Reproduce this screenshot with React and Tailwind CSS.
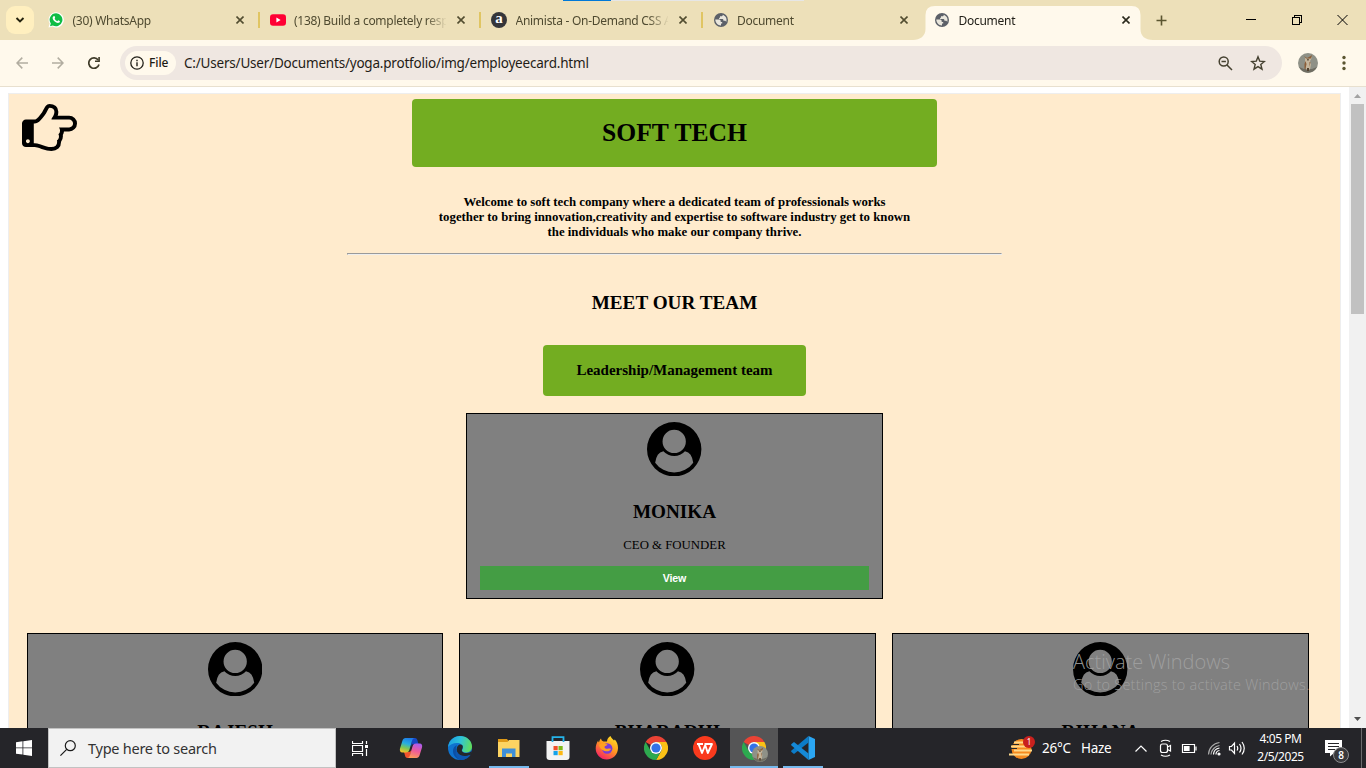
import React from "react";

const Close = ({ dark }) => (
  <svg className="h-2 w-2 shrink-0" viewBox="0 0 8 8">
    <path d="M0.5 0.5L7.5 7.5M7.5 0.5L0.5 7.5" stroke={dark ? "#2b2a1c" : "#524d30"} strokeWidth="1.6" fill="none" />
  </svg>
);

const WhatsApp = () => (
  <svg className="h-4 w-4 shrink-0" viewBox="0 0 16 16">
    <path d="M8.2.3A7.5 7.5 0 0 0 1.7 11.6L.5 15.6l4-1.1A7.6 7.6 0 1 0 8.2.3z" fill="#fff" />
    <path d="M8.2 1.3a6.5 6.5 0 0 0-5.4 10.2l-.8 2.8 2.8-.8A6.5 6.5 0 1 0 8.2 1.3z" fill="#0fbd45" />
    <path d="M5.6 4.2c.5-.3.9-.2 1.1.3l.4 1c.2.5-.4.8-.5 1.2.6 1.2 1.5 2 2.6 2.5.5-.1.8-1 1.2-.9l1.3.7c.5.3.1 1.2-.3 1.5-1.400 1-3.400.2-4.700-1C5.300 8.300 4.300 6.600 4.700 5.200c.2-.4.5-.8.9-1z" fill="#fff" />
  </svg>
);

const YouTube = () => (
  <svg className="h-4 w-4 shrink-0" viewBox="0 0 16 16">
    <rect y="2.300" width="16" height="11.400" rx="3" fill="#f03" />
    <path d="M6.400 5.600v4.800L10.600 8z" fill="#fff" />
  </svg>
);

const Animista = () => (
  <span className="flex h-4 w-4 shrink-0 items-center justify-center rounded-full bg-[#35363a] pb-[3px] font-['Liberation_Serif',serif] text-[15px] leading-[13px] font-bold text-white">
    a
  </span>
);

const Globe = () => (
  <svg className="h-4 w-4 shrink-0" viewBox="0 0 16 16">
    <circle cx="8" cy="8" r="7" fill="#5c6068" />
    <path d="M2.300 7.600h3.500c1.200 0 1.900.6 1.900 1.600v.7h1.500v1.700H8v1.900C5 13.600 2.300 11 2.300 7.600zM9.800 2.700c-.1 1-.6 1.500-1.600 1.500H7v1.500h-.9v1.200h3c.8 0 1.300.5 1.300 1.200v.700h1.300c.8 0 1.200.4 1.500 1.100.9-2.300.2-5.700-3.400-7.200z" fill="#e9e6dc" />
  </svg>
);

const tabs = [
  { icon: <WhatsApp />, title: "(30) WhatsApp" },
  { icon: <YouTube />, title: "(138) Build a completely responsive" },
  { icon: <Animista />, title: "Animista - On-Demand CSS Animations" },
  { icon: <Globe />, title: "Document" },
  { icon: <Globe />, title: "Document", active: true },
];

function TabStrip() {
  return (
    <div className="relative flex h-10 shrink-0 bg-[#ede0b9]">
      <div className="absolute top-0 left-[563px] flex h-px">
        <div className="w-12 bg-[#0078d7]" />
        <div className="w-[193px] bg-[#e6e6e6]" />
      </div>
      <div className="mt-1.5 ml-1.5 flex h-7 w-7 shrink-0 items-center justify-center rounded-[9px] bg-[#ffefbf]">
        <svg className="h-2 w-2.5" viewBox="0 0 10 8">
          <path d="M1.500 2L5 5.500 8.500 2" fill="none" stroke="#25230f" strokeWidth="1.900" />
        </svg>
      </div>
      <div className="ml-[3px] flex">
        {tabs.map((t, i) => (
          <div key={i} className="relative flex h-10 w-[221.5px] items-center pl-[11px]">
            {t.active && (
              <svg className="absolute top-1.5 -left-2.5 h-[34px] w-[240px]" viewBox="0 0 240 34">
                <path d="M0 34C7 34 12.500 30 12.500 23V9Q12.500 0 22 0H218.500Q227.500 0 227.500 9V23C227.500 30 232 34 240 34z" fill="#fff9ec" />
              </svg>
            )}
            <div className="relative flex items-center">
              {t.icon}
              <div
                className={
                  "mt-[2px] ml-[8.5px] w-[152px] overflow-hidden text-[12px] leading-4 tracking-[-0.27px] whitespace-nowrap [mask-image:linear-gradient(to_right,black_132px,transparent_153px)] " +
                  (t.active ? "text-[#23211a]" : "text-[#4f4a30]")
                }
              >
                {t.title}
              </div>
              <div className="ml-[11px] flex">
                <Close dark={t.active} />
              </div>
            </div>
            {i < 3 && <div className="absolute top-3 -right-[1px] h-4 w-0.5 bg-[#e0c562]" />}
          </div>
        ))}
      </div>
      <svg className="mt-[15px] ml-[11px] h-[11px] w-[11px] shrink-0" viewBox="0 0 11 11">
        <path d="M5.500 0.500V10.500M0.500 5.500H10.500" stroke="#5b5530" strokeWidth="1.600" />
      </svg>
      <svg className="mt-[14px] ml-[78px] h-3 w-[103px] shrink-0" viewBox="0 0 103 12">
        <path d="M1 5.500h10M47.500 3.500h7v7h-7zM49.500 3.500v-2h7v7h-2" fill="none" stroke="#000" strokeWidth="1" shapeRendering="crispEdges" />
        <path d="M92.500 1l10 10M102.500 1l-10 10" stroke="#000" strokeWidth="1" />
      </svg>
    </div>
  );
}

const Dog = ({ className }) => (
  <svg className={className} viewBox="0 0 20 20">
    <circle cx="10" cy="10" r="10" fill="#8f9187" />
    <path d="M1 14a10 10 0 0 0 18 0l-5 2H6z" fill="#6f6d62" />
    <path d="M7 4.500l2 1h2l3-1.500-1 2.500-1 1.500 1 3.500-1 5H8l-1-5z" fill="#c5b69c" />
    <path d="M6 3l3 2 2-1 3-2-1 3.500H8zM7.500 8l1 3-1 5H6.500l0-5zM11.500 9h1l-1 5z" fill="#8c5e37" />
    <path d="M9.200 6h1.500v1.500H9.200zM9 15h2v3H9z" fill="#54432f" />
  </svg>
);

function Toolbar() {
  return (
    <div className="flex h-[47px] shrink-0 items-center border-b border-[#e8e0cf] bg-[#fff9ec]">
      <svg className="ml-4 h-3 w-3" viewBox="0 0 12 12">
        <path d="M12 6H1M6.300 .6L1 6l5.300 5.400" fill="none" stroke="#b2ada0" strokeWidth="1.500" />
      </svg>
      <svg className="ml-6 h-3 w-3" viewBox="0 0 12 12">
        <path d="M0 6h11M5.700 .6L11 6l-5.300 5.400" fill="none" stroke="#b2ada0" strokeWidth="1.500" />
      </svg>
      <svg className="ml-6 h-3 w-3" viewBox="0 0 12 12">
        <path d="M10.200 3A5.200 5.200 0 1 0 11 7.500" fill="none" stroke="#3f3b28" strokeWidth="1.700" />
        <path d="M11.900 0v5H7V3.500h3.300V0z" fill="#3f3b28" />
      </svg>
      <div className="ml-5 flex h-[34px] w-[1162px] items-center rounded-full bg-[#efe7e1] pl-[5px]">
        <div className="flex h-6 w-[51px] items-center rounded-full bg-[#fff9ec] pl-[5px]">
          <svg className="h-[14px] w-[14px]" viewBox="0 0 14 14">
            <circle cx="7" cy="7" r="6.200" fill="none" stroke="#23211a" strokeWidth="1.300" />
            <path d="M6.300 6.300h1.400V10.200H6.300zM6.300 3.800h1.400v1.400H6.300z" fill="#23211a" />
          </svg>
          <span className="ml-[5px] text-[12px] font-medium tracking-[-0.1px] text-[#1d1b14]">File</span>
        </div>
        <span className="mt-px ml-2 flex-1 text-[13.500px] tracking-[-0.200px] whitespace-nowrap text-[#1f1c16]">
          C:/Users/User/Documents/yoga.protfolio/img/employeecard.html
        </span>
        <svg className="h-[15px] w-[15px]" viewBox="0 0 15 15">
          <circle cx="5.700" cy="5.500" r="4.500" fill="none" stroke="#454130" strokeWidth="1.500" />
          <path d="M9 9l5 5M3.500 5.500h4.400" stroke="#454130" strokeWidth="1.500" />
        </svg>
        <svg className="mr-4 ml-[17px] h-4 w-4" viewBox="0 0 16 16">
          <path d="M8 1.800l1.700 4.300 4.700.4-3.600 3 1.200 4.600L8 11.600 4 14.100l1.200-4.600-3.600-3 4.700-.4z" fill="none" stroke="#454130" strokeWidth="1.400" />
        </svg>
      </div>
      <Dog className="ml-4 h-5 w-5" />
      <svg className="ml-6 h-4 w-1" viewBox="0 0 4 16">
        <circle cx="2" cy="2.500" r="1.700" fill="#5b5530" />
        <circle cx="2" cy="8" r="1.700" fill="#5b5530" />
        <circle cx="2" cy="13.500" r="1.700" fill="#5b5530" />
      </svg>
    </div>
  );
}

const HandRight = () => (
  <svg className="-mt-px ml-[13px] h-[55px] w-[55px]" viewBox="0 0 1792 1792">
    <path d="M256 1408q0-26-19-45t-45-19-45 19-19 45 19 45 45 19 45-19 19-45zm1408-576q0-51-39-89.500t-89-38.500h-576q0-20 15-48.500t33-55 33-68 15-84.500q0-67-44.500-97.500t-115.500-30.500q-24 0-90 139-24 44-37 65-40 64-112 145-71 81-101 106-69 57-140 57h-32v640h32q72 0 167 32t193.500 64 179.500 32q189 0 189-167 0-26-5-56 30-16 47.500-52.500t17.500-73.500-18-69q53-50 53-119 0-25-10-55.500t-25-47.500h331q52 0 90-38t38-90zm128-1q0 105-75.500 181t-180.500 76h-169q-4 62-37 119 3 21 3 43 0 101-60 178 1 139-85 219.500t-227 80.500q-133 0-322-69-164-59-223-59h-288q-53 0-90.500-37.500t-37.500-90.500v-640q0-53 37.500-90.500t90.500-37.500h288q10 0 21.500-4.500t23.500-14 22.500-18 24-22.500 20.500-21.500 19-21.500 14-17q65-74 100-129 13-21 33-62t37-72 40.500-63 55-49.500 69.500-17.500q125 0 206.500 67t81.500 189q0 68-22 128h374q104 0 180 76t76 179z" />
  </svg>
);

const UserCircle = () => (
  <svg className="h-[54.400px] w-[54.400px] shrink-0" viewBox="0 0 1792 1792">
    <path d="M1523 1339q-22-155-87.500-257.500t-184.500-118.500q-67 74-159.500 115.500t-195.500 41.500-195.500-41.500-159.500-115.500q-119 16-184.500 118.500t-87.500 257.500q106 150 271 237.500t356 87.500 356-87.500 271-237.500zm-243-699q0-159-112.500-271.500t-271.500-112.500-271.500 112.500-112.500 271.500 112.500 271.500 271.500 112.500 271.500-112.500 112.500-271.500zm512 256q0 182-71 347.500t-190.500 286-285.500 191.500-349 71-348-71-286-191-191-286-71-348 71-348 191-286 286-191 348-71 348 71 286 191 191 286 71 348z" />
  </svg>
);

function Card({ name, role, narrow }) {
  return (
    <div
      className={
        "flex h-[186px] shrink-0 flex-col items-center border border-black bg-[#808080] px-[13px] pt-[7.500px] " +
        (narrow ? "w-[416px]" : "w-[417px]")
      }
    >
      <UserCircle />
      <h2 className="mt-[26.100px] text-[19.200px] leading-5 font-bold">{name}</h2>
      <p className="mt-[15px] text-[12.800px] leading-4">{role}</p>
      <button className="mt-[13px] h-6 w-full shrink-0 bg-[#449d44] font-['Liberation_Sans',sans-serif] text-[10.670px] font-bold tracking-[-0.150px] text-white">
        View
      </button>
    </div>
  );
}

function Page() {
  return (
    <div className="relative flex h-[641px] shrink-0 bg-white">
      <div className="h-full w-[1349px] overflow-hidden pt-1.5">
        <div className="ml-2 flex h-[900px] w-[1333px] flex-col items-center border border-[#eee] bg-[#ffebcd] font-['Liberation_Serif',serif] text-black">
          <div className="grid w-full shrink-0 grid-cols-[403px_525px_1fr] pt-[5px]">
            <HandRight />
            <div className="flex h-[68px] items-center justify-center rounded-[4px] bg-[#73ad21]">
              <h1 className="text-[25.600px] leading-8 font-bold">SOFT TECH</h1>
            </div>
          </div>
          <p className="mt-7 w-[490px] text-center text-[12.800px] leading-[15px] font-bold">
            Welcome to soft tech company where a dedicated team of professionals works
            <br />
            together to bring innovation,creativity and expertise to software industry get to known
            <br />
            the individuals who make our company thrive.
          </p>
          <div className="mt-[13px] h-0.5 w-[655px] shrink-0 border border-t-[#9a9a9a] border-r-[#eee] border-b-[#eee] border-l-[#9a9a9a]" />
          <h2 className="mt-[38px] text-[19.200px] leading-5 font-bold">MEET OUR TEAM</h2>
          <div className="mt-8 flex h-[51px] w-[263px] shrink-0 items-center justify-center rounded-[4px] bg-[#73ad21] pb-0.5">
            <h3 className="text-[15px] leading-5 font-bold">Leadership/Management team</h3>
          </div>
          <div className="mt-[17px]">
            <Card name="MONIKA" role="CEO & FOUNDER" />
          </div>
          <div className="mt-[34px] flex w-full gap-4 pl-[18px]">
            <Card name="RAJESH" role="MANAGER" narrow />
            <Card name="BHARADHI" role="MANAGER" />
            <Card name="RIHANA" role="MANAGER" />
          </div>
        </div>
      </div>
      <div className="flex w-[17px] flex-col items-center bg-[#f1f1f1]">
        <svg className="mt-[7px] h-1 w-[7px]" viewBox="0 0 7 4">
          <path d="M0 4L3.500 0 7 4z" fill="#a3a3a3" />
        </svg>
        <div className="mt-1.5 h-[210px] w-[13px] bg-[#c1c1c1]" />
        <svg className="mt-auto mb-[7px] h-1 w-[7px]" viewBox="0 0 7 4">
          <path d="M0 0h7L3.500 4z" fill="#505050" />
        </svg>
      </div>
      <div className="absolute top-[562px] left-[1073px] font-['Open_Sans','Noto_Sans',sans-serif] whitespace-nowrap text-[#a2a2a2]/90">
        <div className="text-[20px] leading-[26px] font-light">Activate Windows</div>
        <div className="text-[14.500px] leading-5 font-light tracking-[0.230px]">Go to Settings to activate Windows.</div>
      </div>
    </div>
  );
}

const ChromeLogo = () => (
  <svg className="h-6 w-6" viewBox="0 0 24 24">
    <path d="M1.600 6A12 12 0 0 1 22.400 6H12a6 6 0 0 0-5.200 3z" fill="#ea4335" />
    <path d="M22.400 6A12 12 0 0 1 12 24l5.200-9A6 6 0 0 0 17.200 9L12 6z" fill="#fbc116" />
    <path d="M1.600 6A12 12 0 0 0 12 24l5.200-9a6 6 0 0 1-10.400 0z" fill="#2da94f" />
    <circle cx="12" cy="12" r="6" fill="#fff" />
    <circle cx="12" cy="12" r="4.600" fill="#3372e8" />
  </svg>
);

const Copilot = () => (
  <svg className="h-6 w-6" viewBox="0 0 24 24">
    <defs>
      <linearGradient id="cpA" x1="0.600" y1="0" x2="0.300" y2="1">
        <stop offset="0" stopColor="#1e7be8" />
        <stop offset="0.400" stopColor="#27aee0" />
        <stop offset="0.700" stopColor="#7cc855" />
        <stop offset="1" stopColor="#f4c22b" />
      </linearGradient>
      <linearGradient id="cpB" x1="0.700" y1="0" x2="0.400" y2="1">
        <stop offset="0" stopColor="#a95df0" />
        <stop offset="0.500" stopColor="#ee5a9b" />
        <stop offset="1" stopColor="#fd9a5b" />
      </linearGradient>
    </defs>
    <path d="M13 2h3c1.500 0 2 1 2.500 2.500L19.500 8H15c-2 0-2.500 1-3 3z" fill="#1746c4" />
    <path d="M11 22H8.500C7 22 6.300 21 6 19.500L5 16h4.500c2 0 2.500-1 3-3z" fill="#f0522c" />
    <path d="M6.500 2H16c-2 0-2.600 1.500-3 3l-2.500 8.500C10 15.500 9 16.500 7 16.500H3.500C1 16.500.5 14.500 1 12.500L3.500 4.500C4 3 5 2 6.500 2z" fill="url(#cpA)" />
    <path d="M17.500 22H8c2 0 2.600-1.500 3-3l2.500-8.500C14 8.500 15 7.500 17 7.500h3.500c2.500 0 3 2 2.500 4l-2.500 8c-.5 1.500-1.500 2.500-3 2.500z" fill="url(#cpB)" />
  </svg>
);

const Edge = () => (
  <svg className="h-6 w-6" viewBox="0 0 24 24">
    <defs>
      <linearGradient id="edA" x1="0" y1="0.300" x2="1" y2="0.500">
        <stop offset="0" stopColor="#1b9de2" />
        <stop offset="0.500" stopColor="#2fc4d8" />
        <stop offset="1" stopColor="#62de5a" />
      </linearGradient>
    </defs>
    <circle cx="12" cy="12" r="12" fill="#0f73cf" />
    <path d="M0 11C1 4 6 0 12 0c7 0 12 5 12 10.500 0 4-3 6-6 6-2.500 0-4-1-4-2 0-.8 1-1.200 1-3 0-2.500-2.500-4.500-6-4.500-4 0-7.500 2-9 4z" fill="url(#edA)" />
    <path d="M9 9c-2.500 1-4 3-4 6 0 4.500 3.500 8.500 8 9 4-.2 7-2 9-5-2 .8-3.500 1.200-5.500 1.200C11 20.200 8 17 8 13.500 8 11.500 8.500 10 9 9z" fill="#0b4fa5" />
    <path d="M14.800 10.500c0 2-1 2.500-1 3.700 0 2 2.500 3 5 2.800 2-.1 3.700-.8 4.700-2 0 1.500-.5 3-1.500 4-2 .9-3.500 1.200-5.500 1.200-5 0-8-3-7.900-6.700.1-2.400 1.400-4.500 3-5 1.900-.3 3.200.6 3.200 2z" fill="#24272b" />
    <path d="M14 24c4-.5 7-2.500 8.500-5-2 .8-4 1.200-6 1.100-4-.2-7.500-2.600-8-6.300C6 18 9 23.500 14 24z" fill="#0d57b1" />
  </svg>
);

const Explorer = () => (
  <svg className="h-6 w-6" viewBox="0 0 24 24">
    <path d="M1 3h9l1.500 2v3H1z" fill="#e09a17" />
    <path d="M1 6h9.500L12 4h10.500v17H1z" fill="#fdd462" />
    <path d="M5 12.500h13.500V21H15v-3.500H9V21H5z" fill="#3f8fd8" />
  </svg>
);

const Store = () => (
  <svg className="h-6 w-6" viewBox="0 0 24 24">
    <path d="M6.500 7V1.200h11V7" fill="none" stroke="#25b4ea" strokeWidth="1.800" />
    <path d="M.5 5h23v16q0 3-3 3h-17q-3 0-3-3z" fill="#f3f3f3" />
    <path d="M5.600 5h1.800v1H5.600zM16.600 5h1.800v1h-1.800z" fill="#25b4ea" />
    <path d="M7.500 10h4.200v4.200H7.500z" fill="#f0502a" />
    <path d="M12.500 10h4.200v4.200h-4.200z" fill="#7fba18" />
    <path d="M7.500 15h4.200v4.200H7.500z" fill="#14a3ea" />
    <path d="M12.500 15h4.200v4.200h-4.200z" fill="#fdb813" />
  </svg>
);

const Firefox = () => (
  <svg className="h-6 w-6" viewBox="0 0 24 24">
    <defs>
      <linearGradient id="ffA" x1="0.800" y1="0" x2="0.200" y2="1">
        <stop offset="0" stopColor="#ffe226" />
        <stop offset="0.450" stopColor="#ff9a1f" />
        <stop offset="1" stopColor="#f5156c" />
      </linearGradient>
    </defs>
    <path d="M15.500 0c.5 2 2.500 3 3.500 4.500l.8-1c2 2 3.200 5 3.200 8.500 0 6.500-5 11.500-11.300 11.500C5.500 23.500.7 18.500.7 12.500c0-3 1-6 2.500-8 0 1 .3 1.500.8 2 .3-1.500 1-3 2-4 .3 1.500 1 2.500 2.500 3h3.500C12 3 13.500 1 15.500 0z" fill="url(#ffA)" />
    <circle cx="12.200" cy="12.500" r="5.200" fill="#7a3bd8" />
    <path d="M4 9c2-2 4-2 6-1l2.500.3c-.3 1.500-3 1.700-3 2.700 0 1.200 1.500 2 3 1.700 1.500-.2 2.500-.5 3.500.2-1 2.300-4 3-6.500 2C6.500 14 4.500 12 4 9z" fill="#ffa020" />
  </svg>
);

const Wps = () => (
  <svg className="h-6 w-6" viewBox="0 0 24 24">
    <circle cx="12" cy="12" r="12" fill="#f93a1d" />
    <path d="M4 8h6M5.500 8l3.500 9 3.200-8 2.600 8L19 8h-7.500" fill="none" stroke="#fff" strokeWidth="1.900" strokeLinejoin="round" />
  </svg>
);

const VsCode = () => (
  <svg className="h-6 w-6" viewBox="0 0 24 24">
    <path d="M17.500 0L24 3v18l-6.500 3z" fill="#2ba6f2" />
    <path d="M17.500 0v6.500L3 18 .2 15.700V14.800z" fill="#0c7cc8" />
    <path d="M17.500 24v-6.500L3 6 .2 8.300v.9z" fill="#1589d6" />
  </svg>
);

const apps = [
  { icon: <Copilot /> },
  { icon: <Edge /> },
  { icon: <Explorer />, open: true },
  { icon: <Store /> },
  { icon: <Firefox /> },
  { icon: <ChromeLogo /> },
  { icon: <Wps /> },
  { icon: <ChromeLogo />, active: true },
  { icon: <VsCode />, open: true },
];

function Taskbar() {
  return (
    <div className="flex h-10 shrink-0 items-center bg-[#252529] text-white">
      <div className="flex h-10 w-12 items-center justify-center">
        <svg className="h-4 w-4" viewBox="0 0 16 16">
          <path d="M0 2.200L6.500 1.300V7.500H0zM7.300 1.200L16 0V7.500H7.300zM0 8.300h6.500v6.300L0 13.700zM7.300 8.300H16V16l-8.700-1.200z" fill="#fff" />
        </svg>
      </div>
      <div className="flex h-10 w-72 items-center border border-[#c2c2c2] bg-[#f2f2f2] pl-[11px]">
        <svg className="h-4 w-4" viewBox="0 0 16 16">
          <circle cx="10.300" cy="5.700" r="5" fill="none" stroke="#1a1a1a" strokeWidth="1.200" />
          <path d="M6.700 9.300L.4 15.600" stroke="#1a1a1a" strokeWidth="1.200" />
        </svg>
        <span className="mt-px ml-3 text-[14.500px] tracking-[-0.250px] whitespace-nowrap text-[#333]">Type here to search</span>
      </div>
      <div className="flex w-12 items-center justify-center">
        <svg className="h-[15px] w-4" viewBox="0 0 16 15">
          <path d="M.5 0v2.500h10V0M.5 15v-2.500h10V15M.5 4.500h10v6H.5zM14.500 0v3M14.500 8v7" fill="none" stroke="#fff" strokeWidth="1.200" />
          <path d="M13 4h3v3h-3z" fill="#fff" />
        </svg>
      </div>
      <div className="ml-[3px] flex gap-px">
        {apps.map((a, i) => (
          <div key={i} className={"relative flex h-10 w-12 items-center justify-center " + (a.active ? "bg-[#555556]" : "")}>
            {a.icon}
            {a.active && <Dog className="absolute top-[18px] left-[22px] h-4 w-4" />}
            {a.open && <div className="absolute bottom-0 left-1 h-0.5 w-10 bg-[#76b9ed]" />}
            {a.active && <div className="absolute bottom-0 left-0 h-0.5 w-12 bg-[#76b9ed]" />}
          </div>
        ))}
      </div>
      <div className="ml-auto flex h-10 items-center">
        <div className="relative mr-[9px] h-6 w-6">
          <svg className="h-6 w-6" viewBox="0 0 24 24">
            <circle cx="12.500" cy="13" r="10" fill="#f58a1f" />
            <path d="M5 6.500h9M2 10.500h15M5 14.500h18M0 18.500h20" stroke="#ffd98a" strokeWidth="1.900" />
            <path d="M1 8.500h9M0 12.500h8" stroke="#252529" strokeWidth="1" />
          </svg>
          <span className="absolute top-0 -right-0.5 flex h-3 w-3 items-center justify-center rounded-full bg-[#c9211e] text-[8px]">1</span>
        </div>
        <span className="w-[39px] text-[13.500px] tracking-[-0.200px] whitespace-nowrap">26°C</span>
        <span className="w-[53px] text-[13.500px] tracking-[-0.300px]">Haze</span>
        <svg className="h-7 w-[112px]" viewBox="1134 734 112 28" fill="none" stroke="#fff" strokeWidth="1.200">
          <path d="M1135.500 751.500l5.500-5.500 5.500 5.500" />
          <rect x="1160.500" y="744" width="7" height="8.500" rx="2" />
          <path d="M1167.500 747l3-1.500v5.500l-3-1.500M1161 741.500q4.500-2.500 9 0M1161 755q4.500 2.500 9 0" />
          <path d="M1182.500 744.500h12v8h-12zM1196 746.500v4" />
          <path d="M1184.500 746.500h4.500v4h-4.500z" fill="#fff" />
          <path d="M1216 754.500a4 4 0 0 1 3.500-4M1213.500 754.500a7 7 0 0 1 6-6.500" />
          <path d="M1211 754.500a10 10 0 0 1 8.500-9M1208.500 754.500a12.500 12.500 0 0 1 11-12" stroke="#aaa" />
          <circle cx="1219" cy="754" r="1" fill="#fff" />
          <path d="M1229.500 746.500h2l3-3.500v10.500l-3-3.500h-2zM1237 746q1.500 2.200 0 4.500M1239.500 744q3 4.200 0 8.500M1242 742q4.500 6.200 0 12.500" />
        </svg>
        <div className="w-[69px] text-center text-[12px] leading-[18px] tracking-[-0.450px] whitespace-nowrap">
          <div>4:05 PM</div>
          <div>2/5/2025</div>
        </div>
        <div className="relative ml-[10px] h-7 w-[25px]">
          <svg className="mt-1.5 h-[17px] w-[17px]" viewBox="0 0 17 17">
            <path d="M0 0h17v13H9l-4 3.500V13H0z" fill="#fff" />
            <path d="M3 3.500h11M3 6.500h11M3 9.500h7" stroke="#252529" />
          </svg>
          <span className="absolute top-[13px] left-2 flex h-4 w-4 items-center justify-center rounded-full border border-[#8d8d8f] bg-[#39393c] text-[10px] font-semibold">8</span>
        </div>
        <div className="ml-[11px] h-10 w-[5px] border-l border-[#6b6b6d]" />
      </div>
    </div>
  );
}

export default function App() {
  return (
    <div className="flex h-[768px] w-[1366px] flex-col overflow-hidden bg-white font-['Noto_Sans','Open_Sans',sans-serif]">
      <TabStrip />
      <Toolbar />
      <Page />
      <Taskbar />
    </div>
  );
}
